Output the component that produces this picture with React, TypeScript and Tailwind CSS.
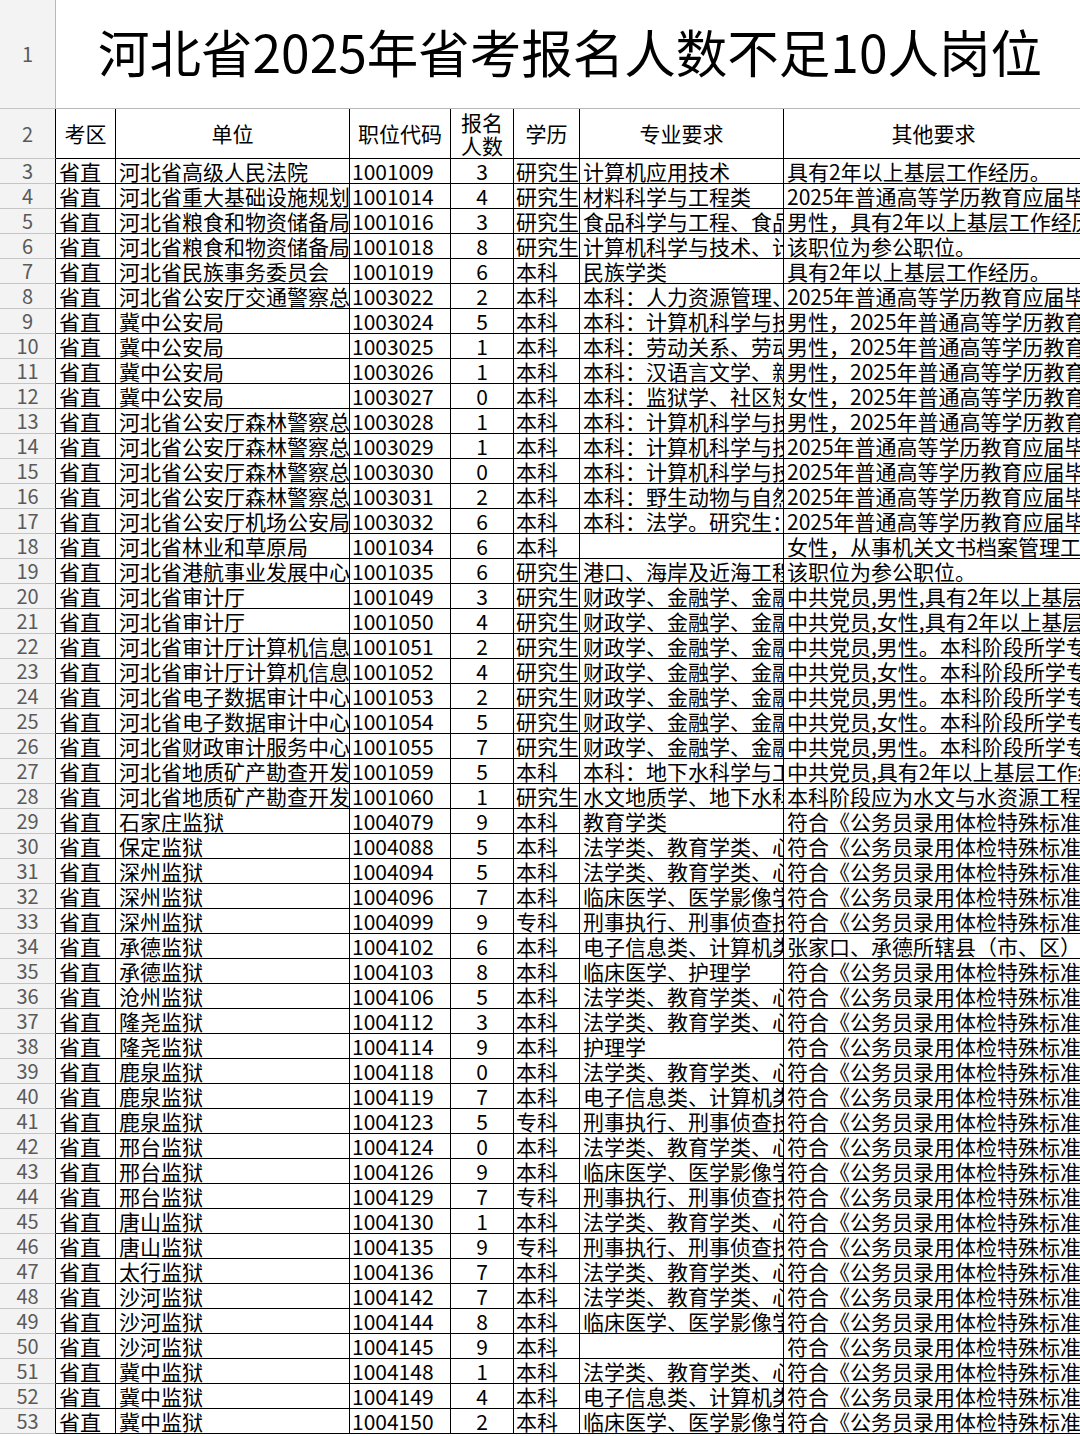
import React from "react";

type Row = [string, string, string, string, string, string, string];

const rows: Row[] = [
  ["省直", "河北省高级人民法院", "1001009", "3", "研究生", "计算机应用技术", "具有2年以上基层工作经历。"],
  ["省直", "河北省重大基础设施规划建设服务中心", "1001014", "4", "研究生", "材料科学与工程类", "2025年普通高等学历教育应届毕业生"],
  ["省直", "河北省粮食和物资储备局", "1001016", "3", "研究生", "食品科学与工程、食品安全", "男性，具有2年以上基层工作经历。"],
  ["省直", "河北省粮食和物资储备局", "1001018", "8", "研究生", "计算机科学与技术、计算机应用技术", "该职位为参公职位。"],
  ["省直", "河北省民族事务委员会", "1001019", "6", "本科", "民族学类", "具有2年以上基层工作经历。"],
  ["省直", "河北省公安厅交通警察总队", "1003022", "2", "本科", "本科：人力资源管理、行政管理", "2025年普通高等学历教育应届毕业生"],
  ["省直", "冀中公安局", "1003024", "5", "本科", "本科：计算机科学与技术", "男性，2025年普通高等学历教育应届毕业生"],
  ["省直", "冀中公安局", "1003025", "1", "本科", "本科：劳动关系、劳动与社会保障", "男性，2025年普通高等学历教育应届毕业生"],
  ["省直", "冀中公安局", "1003026", "1", "本科", "本科：汉语言文学、新闻学", "男性，2025年普通高等学历教育应届毕业生"],
  ["省直", "冀中公安局", "1003027", "0", "本科", "本科：监狱学、社区矫正", "女性，2025年普通高等学历教育应届毕业生"],
  ["省直", "河北省公安厅森林警察总队", "1003028", "1", "本科", "本科：计算机科学与技术", "男性，2025年普通高等学历教育应届毕业生"],
  ["省直", "河北省公安厅森林警察总队", "1003029", "1", "本科", "本科：计算机科学与技术", "2025年普通高等学历教育应届毕业生"],
  ["省直", "河北省公安厅森林警察总队", "1003030", "0", "本科", "本科：计算机科学与技术", "2025年普通高等学历教育应届毕业生"],
  ["省直", "河北省公安厅森林警察总队", "1003031", "2", "本科", "本科：野生动物与自然保护区管理", "2025年普通高等学历教育应届毕业生"],
  ["省直", "河北省公安厅机场公安局", "1003032", "6", "本科", "本科：法学。研究生：法学", "2025年普通高等学历教育应届毕业生"],
  ["省直", "河北省林业和草原局", "1001034", "6", "本科", "", "女性，从事机关文书档案管理工作"],
  ["省直", "河北省港航事业发展中心", "1001035", "6", "研究生", "港口、海岸及近海工程", "该职位为参公职位。"],
  ["省直", "河北省审计厅", "1001049", "3", "研究生", "财政学、金融学、金融", "中共党员,男性,具有2年以上基层工作经历"],
  ["省直", "河北省审计厅", "1001050", "4", "研究生", "财政学、金融学、金融", "中共党员,女性,具有2年以上基层工作经历"],
  ["省直", "河北省审计厅计算机信息中心", "1001051", "2", "研究生", "财政学、金融学、金融", "中共党员,男性。本科阶段所学专业"],
  ["省直", "河北省审计厅计算机信息中心", "1001052", "4", "研究生", "财政学、金融学、金融", "中共党员,女性。本科阶段所学专业"],
  ["省直", "河北省电子数据审计中心", "1001053", "2", "研究生", "财政学、金融学、金融", "中共党员,男性。本科阶段所学专业"],
  ["省直", "河北省电子数据审计中心", "1001054", "5", "研究生", "财政学、金融学、金融", "中共党员,女性。本科阶段所学专业"],
  ["省直", "河北省财政审计服务中心", "1001055", "7", "研究生", "财政学、金融学、金融", "中共党员,男性。本科阶段所学专业"],
  ["省直", "河北省地质矿产勘查开发局", "1001059", "5", "本科", "本科：地下水科学与工程", "中共党员,具有2年以上基层工作经历"],
  ["省直", "河北省地质矿产勘查开发局", "1001060", "1", "研究生", "水文地质学、地下水科学与工程", "本科阶段应为水文与水资源工程"],
  ["省直", "石家庄监狱", "1004079", "9", "本科", "教育学类", "符合《公务员录用体检特殊标准》"],
  ["省直", "保定监狱", "1004088", "5", "本科", "法学类、教育学类、心理学类", "符合《公务员录用体检特殊标准》"],
  ["省直", "深州监狱", "1004094", "5", "本科", "法学类、教育学类、心理学类", "符合《公务员录用体检特殊标准》"],
  ["省直", "深州监狱", "1004096", "7", "本科", "临床医学、医学影像学", "符合《公务员录用体检特殊标准》"],
  ["省直", "深州监狱", "1004099", "9", "专科", "刑事执行、刑事侦查技术", "符合《公务员录用体检特殊标准》"],
  ["省直", "承德监狱", "1004102", "6", "本科", "电子信息类、计算机类", "张家口、承德所辖县（市、区）"],
  ["省直", "承德监狱", "1004103", "8", "本科", "临床医学、护理学", "符合《公务员录用体检特殊标准》"],
  ["省直", "沧州监狱", "1004106", "5", "本科", "法学类、教育学类、心理学类", "符合《公务员录用体检特殊标准》"],
  ["省直", "隆尧监狱", "1004112", "3", "本科", "法学类、教育学类、心理学类", "符合《公务员录用体检特殊标准》"],
  ["省直", "隆尧监狱", "1004114", "9", "本科", "护理学", "符合《公务员录用体检特殊标准》"],
  ["省直", "鹿泉监狱", "1004118", "0", "本科", "法学类、教育学类、心理学类", "符合《公务员录用体检特殊标准》"],
  ["省直", "鹿泉监狱", "1004119", "7", "本科", "电子信息类、计算机类", "符合《公务员录用体检特殊标准》"],
  ["省直", "鹿泉监狱", "1004123", "5", "专科", "刑事执行、刑事侦查技术", "符合《公务员录用体检特殊标准》"],
  ["省直", "邢台监狱", "1004124", "0", "本科", "法学类、教育学类、心理学类", "符合《公务员录用体检特殊标准》"],
  ["省直", "邢台监狱", "1004126", "9", "本科", "临床医学、医学影像学", "符合《公务员录用体检特殊标准》"],
  ["省直", "邢台监狱", "1004129", "7", "专科", "刑事执行、刑事侦查技术", "符合《公务员录用体检特殊标准》"],
  ["省直", "唐山监狱", "1004130", "1", "本科", "法学类、教育学类、心理学类", "符合《公务员录用体检特殊标准》"],
  ["省直", "唐山监狱", "1004135", "9", "专科", "刑事执行、刑事侦查技术", "符合《公务员录用体检特殊标准》"],
  ["省直", "太行监狱", "1004136", "7", "本科", "法学类、教育学类、心理学类", "符合《公务员录用体检特殊标准》"],
  ["省直", "沙河监狱", "1004142", "7", "本科", "法学类、教育学类、心理学类", "符合《公务员录用体检特殊标准》"],
  ["省直", "沙河监狱", "1004144", "8", "本科", "临床医学、医学影像学", "符合《公务员录用体检特殊标准》"],
  ["省直", "沙河监狱", "1004145", "9", "本科", "", "符合《公务员录用体检特殊标准》"],
  ["省直", "冀中监狱", "1004148", "1", "本科", "法学类、教育学类、心理学类", "符合《公务员录用体检特殊标准》"],
  ["省直", "冀中监狱", "1004149", "4", "本科", "电子信息类、计算机类", "符合《公务员录用体检特殊标准》"],
  ["省直", "冀中监狱", "1004150", "2", "本科", "临床医学、医学影像学", "符合《公务员录用体检特殊标准》"],
];

// every cell clips its text at its right border, like a spreadsheet
const cell = "shrink-0 border-r border-b border-black overflow-hidden whitespace-nowrap";

const RowNum = ({ n, dark = true, h }: { n: number; dark?: boolean; h: string }) => (
  <div
    className={`w-[56px] shrink-0 ${h} bg-[#f3f3f3] border-b border-b-[#c4c4c4] border-r ${
      dark ? "border-r-black" : "border-r-[#b8b8b8]"
    } flex items-center justify-center text-[#5a5a5a] text-[20px]`}
  >
    {n}
  </div>
);

export default function App() {
  return (
    <div className="w-[1080px] h-[1436px] overflow-hidden bg-white text-black font-['Noto_Sans_CJK_SC','Noto_Sans',sans-serif]">
      {/* title row */}
      <div className="flex">
        <RowNum n={1} dark={false} h="h-[109px]" />
        <div className="w-[1024px] h-[109px] border-b border-[#b8b8b8] flex items-center justify-center text-[51.5px] leading-none pb-[6px] pl-[4px]">
          河北省2025年省考报名人数不足10人岗位
        </div>
      </div>

      {/* header row */}
      <div className="flex text-[21px]">
        <RowNum n={2} h="h-[50px]" />
        <div className={`${cell} w-[60px] h-[50px] flex items-center justify-center`}>考区</div>
        <div className={`${cell} w-[234px] h-[50px] flex items-center justify-center`}>单位</div>
        <div className={`${cell} w-[101px] h-[50px] flex items-center justify-center`}>职位代码</div>
        <div className={`${cell} w-[63px] h-[50px] flex flex-col items-center justify-center leading-[23px] whitespace-normal`}>
          <span>报名</span>
          <span>人数</span>
        </div>
        <div className={`${cell} w-[66px] h-[50px] flex items-center justify-center`}>学历</div>
        <div className={`${cell} w-[204px] h-[50px] flex items-center justify-center`}>专业要求</div>
        <div className={`${cell} w-[300px] h-[50px] flex items-center justify-center`}>其他要求</div>
      </div>

      {/* data rows */}
      {rows.map((r, i) => (
        <div key={i} className="flex text-[21px] leading-[24px]">
          <RowNum n={i + 3} h="h-[25px]" />
          <div className={`${cell} w-[60px] h-[25px] pl-[3px]`}>{r[0]}</div>
          <div className={`${cell} w-[234px] h-[25px] pl-[3px]`}>{r[1]}</div>
          <div className={`${cell} w-[101px] h-[25px] pl-[2px]`}>{r[2]}</div>
          <div className={`${cell} w-[63px] h-[25px] text-center`}>{r[3]}</div>
          <div className={`${cell} w-[66px] h-[25px] pl-[2px]`}>{r[4]}</div>
          <div className={`${cell} w-[204px] h-[25px] pl-[3px]`}>{r[5]}</div>
          <div className={`${cell} w-[300px] h-[25px] pl-[3px]`}>{r[6]}</div>
        </div>
      ))}
    </div>
  );
}
